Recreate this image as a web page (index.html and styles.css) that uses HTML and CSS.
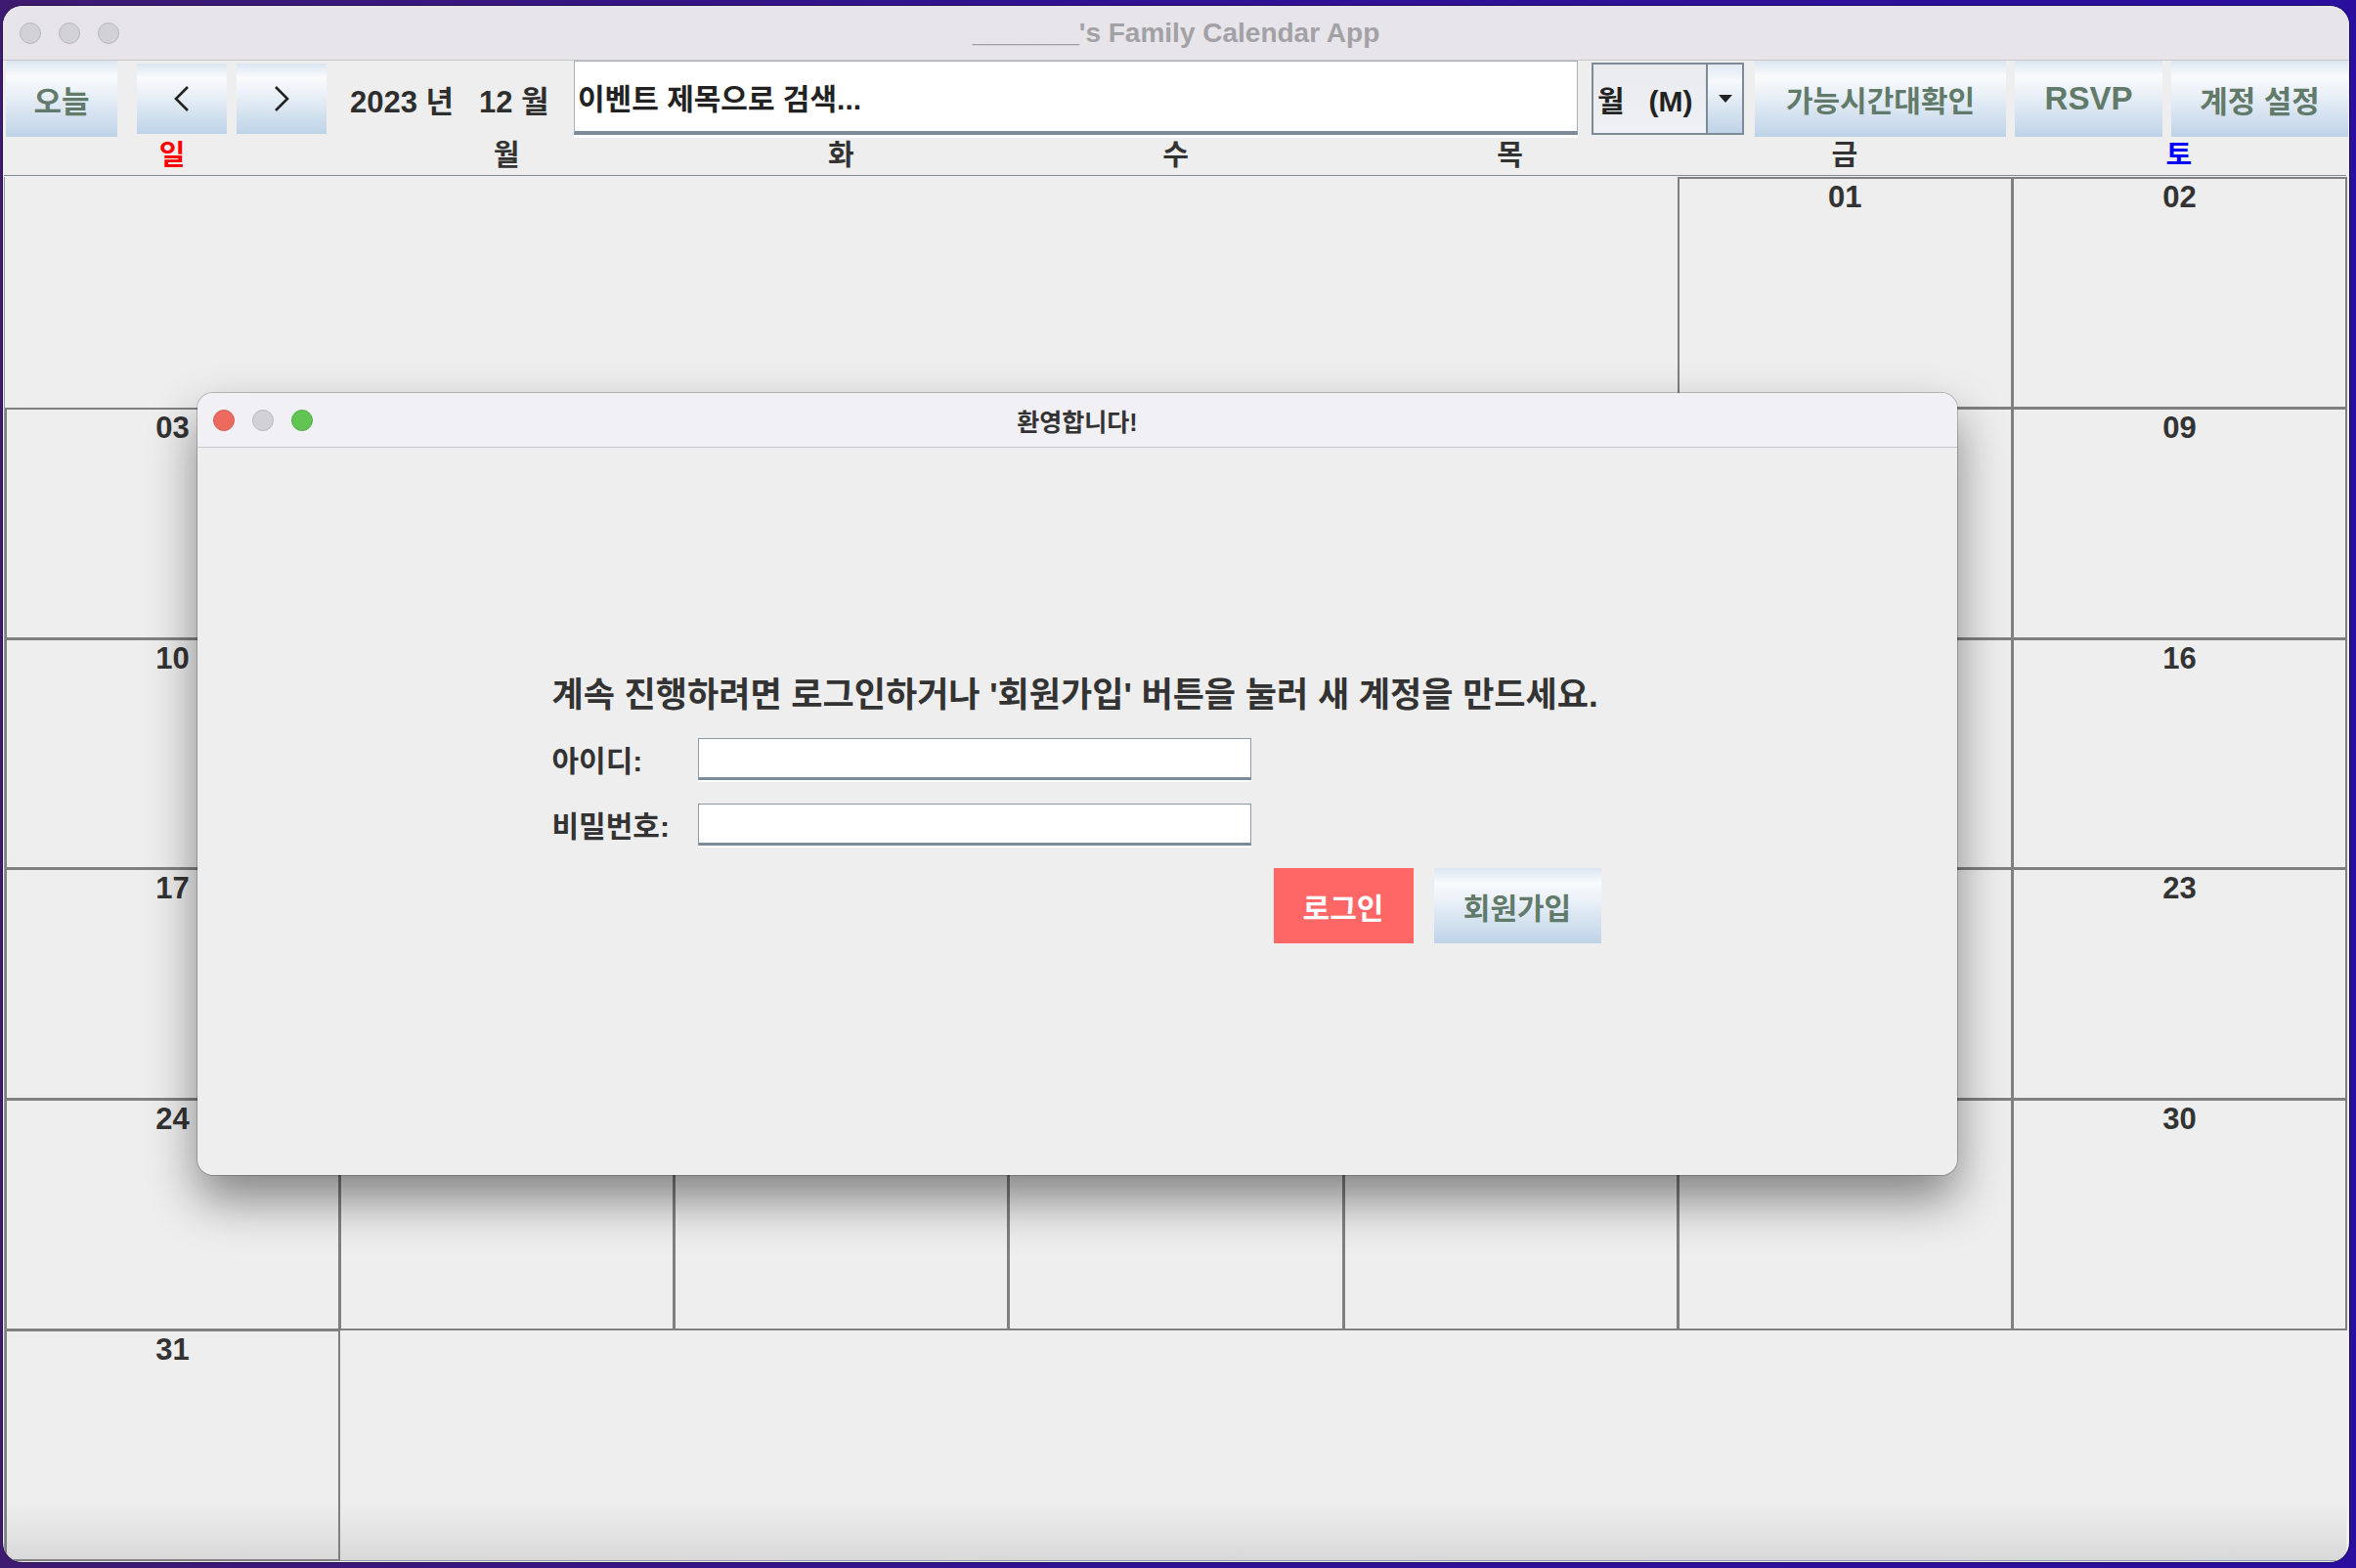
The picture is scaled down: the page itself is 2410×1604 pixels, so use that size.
FILE: index.html
```html
<!DOCTYPE html>
<html lang="ko">
<head>
<meta charset="utf-8">
<title>Family Calendar App</title>
<link rel="stylesheet" href="styles.css">
</head>
<body>
<div class="window">
  <div class="titlebar">
    <div class="lights">
      <span class="light gray"></span><span class="light gray"></span><span class="light gray"></span>
    </div>
    <div class="win-title">_______'s Family Calendar App</div>
  </div>
  <div class="toolbar">
    <button class="btn btn-today">오늘</button>
    <button class="btn btn-nav btn-prev"><svg width="22" height="30" viewBox="0 0 22 30"><path d="M17 3 L5 15 L17 27" fill="none" stroke="#222" stroke-width="2.6"/></svg></button>
    <button class="btn btn-nav btn-next"><svg width="22" height="30" viewBox="0 0 22 30"><path d="M5 3 L17 15 L5 27" fill="none" stroke="#222" stroke-width="2.6"/></svg></button>
    <div class="ym">2023 년&nbsp;&nbsp; 12 월</div>
    <div class="search">이벤트 제목으로 검색...</div>
    <div class="combo">
      <div class="combo-val">월&nbsp;&nbsp; (M)</div>
      <div class="combo-arrow"><svg width="16" height="10" viewBox="0 0 16 10"><path d="M1 1 H15 L8 9 Z" fill="#222"/></svg></div>
    </div>
    <button class="btn btn-avail">가능시간대확인</button>
    <button class="btn btn-rsvp">RSVP</button>
    <button class="btn btn-acct">계정 설정</button>
  </div>
  <div class="weekdays">
    <div class="wd sun">일</div><div class="wd">월</div><div class="wd">화</div><div class="wd">수</div><div class="wd">목</div><div class="wd">금</div><div class="wd sat">토</div>
  </div>
  <div class="grid">
    <div class="cell empty"></div><div class="cell empty"></div><div class="cell empty"></div><div class="cell empty"></div><div class="cell empty"></div><div class="cell day">01</div><div class="cell day">02</div>
    <div class="cell day">03</div><div class="cell day">04</div><div class="cell day">05</div><div class="cell day">06</div><div class="cell day">07</div><div class="cell day">08</div><div class="cell day">09</div>
    <div class="cell day">10</div><div class="cell day">11</div><div class="cell day">12</div><div class="cell day">13</div><div class="cell day">14</div><div class="cell day">15</div><div class="cell day">16</div>
    <div class="cell day">17</div><div class="cell day">18</div><div class="cell day">19</div><div class="cell day">20</div><div class="cell day">21</div><div class="cell day">22</div><div class="cell day">23</div>
    <div class="cell day">24</div><div class="cell day">25</div><div class="cell day">26</div><div class="cell day">27</div><div class="cell day">28</div><div class="cell day">29</div><div class="cell day">30</div>
    <div class="cell day">31</div><div class="cell empty"></div><div class="cell empty"></div><div class="cell empty"></div><div class="cell empty"></div><div class="cell empty"></div><div class="cell empty"></div>
  </div>
</div>

<div class="dialog">
  <div class="dlg-titlebar">
    <div class="lights dlg-lights">
      <span class="light red"></span><span class="light gray"></span><span class="light green"></span>
    </div>
    <div class="dlg-title">환영합니다!</div>
  </div>
  <div class="dlg-body">
    <div class="login">
      <div class="msg">계속 진행하려면 로그인하거나 '회원가입' 버튼을 눌러 새 계정을 만드세요.</div>
      <div class="field"><div class="lbl">아이디:</div><div class="input"></div></div>
      <div class="field"><div class="lbl">비밀번호:</div><div class="input"></div></div>
      <div class="actions">
        <button class="btn-login">로그인</button>
        <button class="btn btn-join">회원가입</button>
      </div>
    </div>
  </div>
</div>
</body>
</html>
```

FILE: styles.css
```css
* { box-sizing: border-box; }

html, body {
  margin: 0;
  width: 2410px;
  height: 1604px;
  overflow: hidden;
}

body {
  background: linear-gradient(90deg, #3e1a70 0%, #2f1292 45%, #2a0f9e 100%);
  font-family: "Liberation Sans", "Noto Sans CJK KR", sans-serif;
  font-weight: 700;
  color: #333;
  position: relative;
  padding: 6px 0 0 3px;
}

.window {
  width: 2400px;
  height: 1592px;
  background: #eeeeee;
  border-radius: 20px;
  overflow: hidden;
  display: flex;
  flex-direction: column;
  box-shadow: 0 0 0 1px rgba(0,0,0,0.35);
}

/* title bar */
.titlebar {
  height: 56px;
  flex: none;
  background: #e7e5ea;
  border-bottom: 1px solid #c6c5ca;
  display: flex;
  align-items: center;
  position: relative;
}
.lights {
  display: flex;
  gap: 18px;
  padding-left: 17px;
}
.light {
  width: 22px;
  height: 22px;
  border-radius: 50%;
  display: block;
}
.light.gray { background: #d2d1d6; border: 1px solid #b8b7bc; }
.light.red { background: #ec6a5e; border: 1px solid #d55a4e; }
.light.green { background: #61c554; border: 1px solid #51ad45; }

.win-title {
  position: absolute;
  left: 0;
  right: 0;
  text-align: center;
  font-size: 28px;
  color: #a2a1a6;
}

/* toolbar */
.toolbar {
  height: 78px;
  flex: none;
  display: flex;
  align-items: center;
  padding-left: 3px;
}
.btn {
  border: none;
  margin: 0;
  padding: 0;
  font-family: "Liberation Sans", "Noto Sans CJK KR", sans-serif;
  font-weight: 700;
  font-size: 30px;
  color: #617a6a;
  background: linear-gradient(to bottom, #dbe6f1 0%, #f9fbfd 20%, #e9f0f7 45%, #bed3e8 100%);
  display: flex;
  align-items: center;
  justify-content: center;
  flex: none;
}
.btn-today { width: 114px; height: 78px; font-size: 31px; }
.btn-nav { width: 92px; height: 72px; }
.btn-prev { margin-left: 20px; }
.btn-next { margin-left: 10px; }
.ym {
  width: 205px;
  margin-left: 24px;
  font-size: 31px;
  color: #2e2e2e;
  white-space: nowrap;
  flex: none;
}
.search {
  width: 1027px;
  height: 76px;
  margin-left: 24px;
  background: #ffffff;
  border: 1px solid #a6b0bb;
  border-bottom: 4px solid #7d8b99;
  box-shadow: 0 3px 0 #ffffff;
  font-size: 30px;
  color: #222;
  display: flex;
  align-items: center;
  padding-left: 3px;
  flex: none;
  align-self: flex-start;
}
.combo {
  width: 156px;
  height: 74px;
  margin-left: 14px;
  display: flex;
  border: 2px solid #7d8b99;
  flex: none;
}
.combo-val {
  flex: 1;
  background: linear-gradient(to bottom, #e9ebee, #eef0f3);
  font-size: 30px;
  color: #222;
  display: flex;
  align-items: center;
  padding-left: 4px;
  white-space: nowrap;
}
.combo-arrow {
  width: 37px;
  border-left: 2px solid #7d8b99;
  background: linear-gradient(to bottom, #e2eaf3 0%, #f6f9fc 25%, #bfd3e8 100%);
  display: flex;
  align-items: center;
  justify-content: center;
}
.btn-avail { width: 257px; height: 78px; margin-left: 11px; }
.btn-rsvp { width: 151px; height: 78px; margin-left: 9px; font-size: 33px; }
.btn-acct { width: 181px; height: 78px; margin-left: 9px; font-size: 31px; }

/* weekdays */
.weekdays {
  height: 40px;
  flex: none;
  display: grid;
  grid-template-columns: repeat(7, 1fr);
  margin: 0 3px 0 1px;
  padding-left: 1px;
  border-bottom: 1px solid #7d8b99;
}
.wd {
  text-align: center;
  font-size: 29px;
  line-height: 38px;
  color: #333;
}
.wd.sun { color: #ff0000; }
.wd.sat { color: #0000ff; }

/* grid */
.grid {
  height: 1416px;
  flex: none;
  margin: 1px 3px 0 1px;
  display: grid;
  grid-template-columns: repeat(7, 1fr);
  grid-template-rows: repeat(6, 1fr);
  background: linear-gradient(to bottom, rgba(0,0,0,0) calc(100% - 60px), rgba(0,0,0,0.09) 100%);
  border-left: 1px solid #8e99a6;
  border-bottom: 1px solid #8e99a6;
}
.cell.day {
  border: 2px solid #808080;
  margin: 0 -1px -1px 0;
  text-align: center;
  font-size: 31px;
  color: #333;
  padding-top: 1px;
}

/* dialog */
.dialog {
  position: absolute;
  left: 202px;
  top: 402px;
  width: 1800px;
  height: 800px;
  border-radius: 16px;
  background: #eeeeee;
  overflow: hidden;
  box-shadow: 0 0 0 1px rgba(0,0,0,0.2), 0 25px 50px rgba(0,0,0,0.45);
  display: flex;
  flex-direction: column;
}
.dlg-titlebar {
  height: 56px;
  flex: none;
  background: #f1f0f5;
  border-bottom: 1px solid #c9c8cc;
  display: flex;
  align-items: center;
  position: relative;
}
.dlg-lights { padding-left: 16px; }
.dlg-title {
  position: absolute;
  left: 0;
  right: 0;
  text-align: center;
  font-size: 25px;
  color: #333;
}
.dlg-body {
  flex: 1;
  display: flex;
  align-items: center;
  justify-content: center;
}
.login {
  width: 1073px;
  display: flex;
  flex-direction: column;
  margin-left: -2px;
  padding-bottom: 6px;
}
.msg {
  font-size: 35px;
  line-height: 44px;
  color: #333;
  white-space: nowrap;
}
.field {
  display: flex;
  align-items: center;
  margin-top: 21px;
}
.field + .field { margin-top: 23px; }
.lbl {
  width: 149px;
  font-size: 30px;
  color: #333;
}
.input {
  width: 566px;
  height: 43px;
  background: #ffffff;
  border: 1px solid #8c99a6;
  border-bottom: 3px solid #7d8b99;
  box-shadow: 0 2px 0 #ffffff;
}
.actions {
  display: flex;
  justify-content: flex-end;
  gap: 21px;
  margin-top: 23px;
}
.btn-login {
  width: 143px;
  height: 77px;
  border: none;
  background: #ff6666;
  color: #ffffff;
  font-family: "Liberation Sans", "Noto Sans CJK KR", sans-serif;
  font-weight: 700;
  font-size: 30px;
}
.btn-join {
  width: 171px;
  height: 77px;
  font-size: 30px;
}
```
